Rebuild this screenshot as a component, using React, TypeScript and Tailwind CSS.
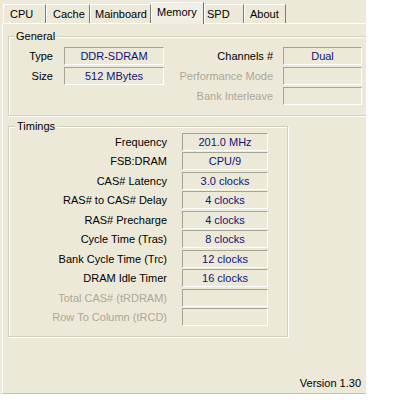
import React from 'react'

const tabs = [
  { label: 'CPU', cls: 'w-[43px] pl-[6px]' },
  { label: 'Cache', cls: 'w-[44px] pl-[6px]' },
  { label: 'Mainboard', cls: 'w-[61px] pl-[4px]' },
  { label: 'Memory', cls: 'w-[53px] pl-[5px]', active: true },
  { label: 'SPD', cls: 'w-[40px] pl-[2px]' },
  { label: 'About', cls: 'w-[42px] pl-[5px]' },
]

const timings = [
  { label: 'Frequency', value: '201.0 MHz' },
  { label: 'FSB:DRAM', value: 'CPU/9' },
  { label: 'CAS# Latency', value: '3.0 clocks' },
  { label: 'RAS# to CAS# Delay', value: '4 clocks' },
  { label: 'RAS# Precharge', value: '4 clocks' },
  { label: 'Cycle Time (Tras)', value: '8 clocks' },
  { label: 'Bank Cycle Time (Trc)', value: '12 clocks' },
  { label: 'DRAM Idle Timer', value: '16 clocks' },
  { label: 'Total CAS# (tRDRAM)', value: '', off: true },
  { label: 'Row To Column (tRCD)', value: '', off: true },
]

function Field({ value, w }: { value?: string; w: string }) {
  return (
    <div className={`${w} h-[18px] border border-t-[#A7A496] border-l-[#A7A496] border-b-white border-r-white text-center leading-[16px] text-[#12127a]`}>
      {value}
    </div>
  )
}

export default function App() {
  return (
    <div className="w-[400px] h-[400px] bg-white font-['Liberation_Sans',Arial,sans-serif] text-[11px] text-black">
      <div className="w-[366px] h-[394px] bg-[#ECE9D8] flex flex-col overflow-hidden">
        {/* tab strip */}
        <div className="h-[23px] shrink-0 flex items-end pl-[3px]">
          {tabs.map(t => t.active ? (
            <div key={t.label} className={`${t.cls} relative z-10 h-[22px] -mb-[1px] bg-[#F1EFE4] border-t border-l border-r border-t-white border-l-white border-r-[#716F64] pt-[3px] leading-[13px]`}>
              {t.label}
            </div>
          ) : (
            <div key={t.label} className={`${t.cls} h-[19px] border-t border-l border-r border-t-white border-l-white border-r-[#7E7C70] pt-[3px] leading-[13px]`}>
              {t.label}
            </div>
          ))}
        </div>

        {/* pane */}
        <div className="ml-[2px] w-[364px] flex-1 flex flex-col border-t border-l border-b border-t-white border-l-white border-b-[#C4C1B2] pl-[5px]">
          {/* General */}
          <div className="relative mt-[12px] w-[358px] h-[80px] border border-r-0 border-[#D0D0BF] shadow-[inset_1px_1px_0_#fff,0_1px_0_#fff] pt-[10px] flex">
            <span className="absolute -top-[7px] left-[5px] px-[2px] bg-[#ECE9D8] leading-[13px]">General</span>
            <div className="flex flex-col gap-[2px]">
              {[['Type', 'DDR-SDRAM'], ['Size', '512 MBytes']].map(([l, v]) => (
                <div key={l} className="flex items-center">
                  <div className="w-[44px] text-right leading-[13px]">{l}</div>
                  <div className="ml-[11px]"><Field value={v} w="w-[100px]" /></div>
                </div>
              ))}
            </div>
            <div className="flex flex-col gap-[2px]">
              {[['Channels #', 'Dual', false], ['Performance Mode', '', true], ['Bank Interleave', '', true]].map(([l, v, off]) => (
                <div key={l as string} className="flex items-center">
                  <div className={`w-[109px] text-right leading-[13px] ${off ? 'text-[#ACA899]' : ''}`}>{l}</div>
                  <div className="ml-[10px]"><Field value={v as string} w="w-[79px]" /></div>
                </div>
              ))}
            </div>
          </div>

          {/* Timings */}
          <div className="relative mt-[10px] w-[280px] h-[211px] border border-[#D0D0BF] shadow-[inset_1px_1px_0_#fff,1px_1px_0_#fff] pt-[6px]">
            <span className="absolute -top-[7px] left-[6px] px-[2px] bg-[#ECE9D8] leading-[13px]">Timings</span>
            {timings.map((r, i) => (
              <div key={r.label} className={`flex items-center ${i === 0 ? '' : i % 2 === 1 ? 'mt-[1px]' : 'mt-[2px]'}`}>
                <div className={`w-[158px] text-right leading-[13px] ${r.off ? 'text-[#ACA899]' : ''}`}>{r.label}</div>
                <div className="ml-[15px]"><Field value={r.value} w="w-[86px]" /></div>
              </div>
            ))}
          </div>

          <div className="flex-1 flex items-end justify-end pr-[5px] pb-[3px]">
            <span className="leading-[13px]">Version 1.30</span>
          </div>
        </div>
      </div>
    </div>
  )
}
